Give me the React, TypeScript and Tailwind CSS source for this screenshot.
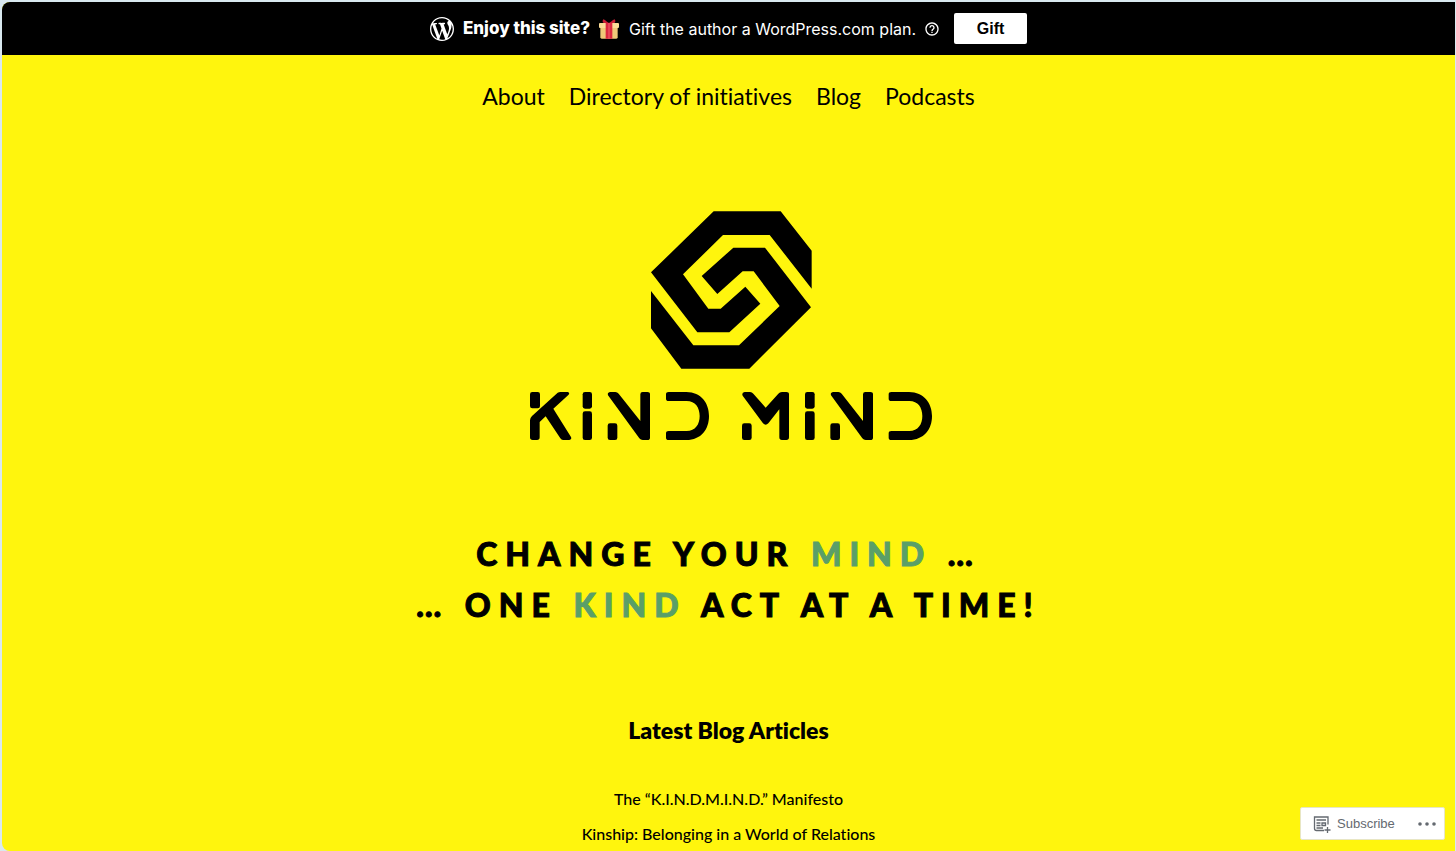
import { MdHelpOutline } from 'react-icons/md';

const navLinks = ['About', 'Directory of initiatives', 'Blog', 'Podcasts'];

const articles = ['The “K.I.N.D.M.I.N.D.” Manifesto', 'Kinship: Belonging in a World of Relations'];

const WordPressIcon = () => (
  <svg viewBox="0 0 20 20" className="w-6 h-6 mr-[9px] shrink-0" fill="currentColor" aria-hidden="true">
    <path d="M20 10c0-5.51-4.49-10-10-10C4.48 0 0 4.49 0 10c0 5.52 4.48 10 10 10 5.51 0 10-4.48 10-10zM7.78 15.37L4.37 6.22c.55-.02 1.17-.08 1.17-.08.5-.06.44-1.13-.06-1.11 0 0-1.45.11-2.37.11-.18 0-.37 0-.58-.01C4.12 2.69 6.87 1.11 10 1.11c2.33 0 4.45.87 6.05 2.34-.68-.11-1.65.39-1.65 1.58 0 .74.45 1.36.9 2.1.35.61.55 1.36.55 2.46 0 1.49-1.4 5-1.4 5l-3.03-8.37c.54-.02.82-.17.82-.17.5-.05.44-1.25-.06-1.22 0 0-1.44.12-2.38.12-.87 0-2.33-.12-2.33-.12-.5-.03-.56 1.2-.06 1.22l.92.08 1.26 3.41zM17.41 10c.24-.64.74-1.87.43-4.25.7 1.29 1.05 2.71 1.05 4.25 0 3.29-1.73 6.24-4.4 7.78.97-2.59 1.94-5.2 2.92-7.78zM6.1 18.09C3.12 16.65 1.11 13.53 1.11 10c0-1.3.23-2.48.72-3.59C3.25 10.3 4.67 14.2 6.1 18.09zm4.03-6.63l2.58 6.98c-.86.29-1.76.45-2.71.45-.79 0-1.57-.11-2.29-.33.81-2.38 1.62-4.74 2.42-7.1z" />
  </svg>
);

const GiftIcon = () => (
  <svg viewBox="0 0 60 60" className="w-5 h-5 shrink-0" aria-hidden="true">
    <path d="M4 24h52v31a4 4 0 0 1-4 4H8a4 4 0 0 1-4-4z" fill="#f0c878" />
    <rect x="0" y="12" width="60" height="15" rx="3" fill="#fbdc96" />
    <path d="M20 12h20v47H20z" fill="#dc2840" />
    <path d="M30 12C24 10 17 1 13 1c-3 4-3 9 1 11zM30 12C36 10 43 1 47 1c3 4 3 9-1 11z" fill="#c81e34" />
    <path d="M28 12h4v47h-4z" fill="#ef5464" />
  </svg>
);

const GiftBanner = () => (
  <div className="flex flex-wrap items-center justify-center bg-black text-white px-4 py-[11px] font-['Inter',sans-serif] text-base">
    <WordPressIcon />
    <strong className="font-extrabold text-[17px] mr-[9px]">Enjoy this site?</strong>
    <GiftIcon />
    <span className="ml-[10px] mr-2">Gift the author a WordPress.com plan.</span>
    <MdHelpOutline className="w-4 h-4 mr-[14px]" />
    <button className="w-[73px] h-[31px] bg-white text-black rounded-xs font-bold font-['Liberation_Sans',sans-serif]">
      Gift
    </button>
  </div>
);

const Logo = () => (
  <svg viewBox="0 0 1218 696" className="w-[406px] max-w-full" role="img" aria-label="Kind Mind">
    <g transform="translate(336 -30)">
      <path d="M221 34H422L515 152V266L389 105H249L129 223L205 326H242L316 260L361 311L268 397H172L33 217Z" />
      <path d="M33 273L160 436H297L419 318L341 214H308L232 282L185 228L280 143H375L513 322L328 506H124L33 385Z" />
    </g>
    <g transform="translate(-24 510)">
      <rect x="30" y="36" width="30" height="49" rx="7" />
      <path d="M113 38Q117 36 121 36H143Q151 38 145 45L100 86L153 171Q156 178 148 180H129Q124 180 121 175L77 109L59 126V172Q59 180 51 180H38Q30 180 30 172V121Q30 114 36 108Z" />
      <rect x="188" y="36" width="28" height="50" rx="7" />
      <rect x="188" y="94" width="28" height="86" rx="7" />
      <path d="M270 36H286Q292 36 296 41L361 123V43Q361 36 368 36H382Q390 36 390 43V173Q390 180 382 180H368Q362 180 358 175L264 46Q261 38 270 36Z" />
      <rect x="263" y="130" width="29" height="50" rx="7" />
      <path d="M446 36H499C544 36 567 70 567 108C567 148 544 180 499 180H446Q438 180 438 173V160Q438 153 446 153H500C526 153 539 133 539 108C539 83 526 63 500 63H446Q438 63 438 56V43Q438 36 446 36Z" />
    </g>
    <g transform="translate(606 510)">
      <path d="M44 36H60Q66 36 70 41L107 83L145 41Q149 36 156 36H169Q177 36 177 43V172Q177 180 169 180H156Q148 180 148 172V88L115 130Q107 138 99 130L38 47Q34 38 44 36Z" />
      <rect x="36" y="130" width="29" height="50" rx="7" />
      <rect x="225" y="36" width="29" height="50" rx="7" />
      <rect x="225" y="94" width="29" height="86" rx="7" />
      <path d="M309 36H325Q331 36 335 41L399 123V43Q399 36 406 36H421Q429 36 429 43V173Q429 180 421 180H407Q401 180 397 175L303 46Q300 38 309 36Z" />
      <rect x="301" y="130" width="29" height="50" rx="7" />
      <path d="M484 36H537C582 36 606 70 606 108C606 148 582 180 537 180H484Q476 180 476 173V160Q476 153 484 153H538C564 153 577 133 577 108C577 83 564 63 538 63H484Q476 63 476 56V43Q476 36 484 36Z" />
    </g>
  </svg>
);

const SubscribeBar = () => (
  <div className="fixed right-[11px] bottom-[11px] flex items-center h-[33px] w-[145px] pl-3 pr-2 bg-white border border-[#e8e6c4] rounded-xs text-[#646970] font-['Liberation_Sans',sans-serif] text-[13px]">
    <button className="flex items-center gap-[6px]">
      <svg viewBox="0 0 18 18" className="w-[18px] h-[18px]" fill="none" stroke="currentColor" strokeWidth="1.3" aria-hidden="true">
        <path d="M15 9.5V2H1.5V13.5Q1.5 15.5 3.5 15.5H11M3.5 5H13M3.5 8H7.5M3.5 10.5H7.5M3.5 13H10M9 8H12.5V10.5H9ZM14.5 12V18M11.5 15H17.5" />
      </svg>
      Subscribe
    </button>
    <button className="ml-auto" aria-label="More options">
      <svg viewBox="0 0 18 4" className="w-[18px] h-1" fill="currentColor">
        <circle cx="2" cy="2" r="1.8" />
        <circle cx="9" cy="2" r="1.8" />
        <circle cx="16" cy="2" r="1.8" />
      </svg>
    </button>
  </div>
);

const App: React.FC = () => {
  return (
    <div className="flex min-h-screen bg-[#d9e8ef] pt-[2px] pl-[2px] pb-px pr-px">
      <div className="flex-1 bg-[#fff50d] text-black rounded-l-lg overflow-hidden font-['Lato',sans-serif] [font-variant-ligatures:none]">
        <GiftBanner />
        <nav className="flex flex-wrap justify-center gap-6 px-4 pt-[25px] text-[23px] leading-8">
          {navLinks.map((link) => (
            <a key={link} href="#">
              {link}
            </a>
          ))}
        </nav>
        <main className="flex flex-col items-center text-center px-4">
          <div className="mt-[98px] ml-1">
            <Logo />
          </div>
          <h1 className="mt-[86px] text-[32px] leading-[51px] font-black uppercase tracking-[8px] [-webkit-text-stroke:1px]">
            Change your <span className="text-[#5a9f68]">mind</span> …
            <br />… one <span className="text-[#5a9f68]">kind</span> act at a time!
          </h1>
          <h2 className="mt-[84px] text-[23px] leading-8 font-extrabold">Latest Blog Articles</h2>
          <ul className="mt-[35px] text-base leading-[35px] font-medium">
            {articles.map((title) => (
              <li key={title}>
                <a href="#">{title}</a>
              </li>
            ))}
          </ul>
        </main>
      </div>
      <SubscribeBar />
    </div>
  );
};

export default App;
